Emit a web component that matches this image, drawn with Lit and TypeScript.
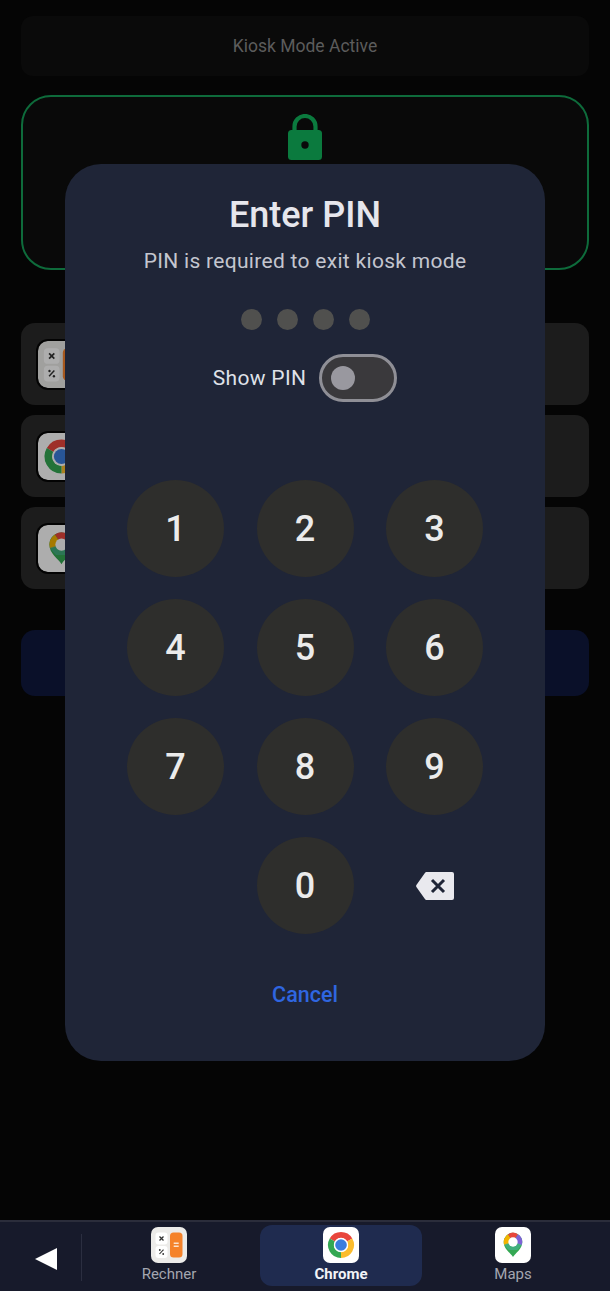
import { LitElement, html, css, svg } from "lit";
import { customElement } from "lit/decorators.js";

const calcIcon = svg`<svg viewBox="0 0 36 36" width="100%" height="100%">
  <rect width="36" height="36" rx="7" fill="#ecebe9"/>
  <rect x="4.500" y="5.500" width="12" height="12" rx="3" fill="#fff"/>
  <rect x="4.500" y="19" width="12" height="12" rx="3" fill="#fff"/>
  <rect x="19" y="5.500" width="12.500" height="25" rx="3.500" fill="#f5822a"/>
  <path d="M8.500 9.500l4 4M12.500 9.500l-4 4" stroke="#333" stroke-width="1.300"/>
  <path d="M8.500 27l4-4.400" stroke="#333" stroke-width="1.100"/>
  <circle cx="8.800" cy="23" r=".9" fill="#333"/><circle cx="12.200" cy="27" r=".9" fill="#333"/>
  <path d="M22.700 16.300h5M22.700 19.300h5" stroke="#fbe3cf" stroke-width="1.500"/>
</svg>`;

const chromeIcon = svg`<svg viewBox="0 0 36 36" width="100%" height="100%">
  <rect width="36" height="36" rx="7" fill="#fff"/>
  <g fill="none" stroke-width="6">
    <path d="M9.340 13A10 10 0 0 1 26.660 13" stroke="#e8453c"/>
    <path d="M26.660 13A10 10 0 0 1 18 28" stroke="#fbbc2d"/>
    <path d="M18 28A10 10 0 0 1 9.340 13" stroke="#34a853"/>
  </g>
  <circle cx="18" cy="18" r="7.200" fill="#fff"/>
  <circle cx="18" cy="18" r="5.800" fill="#3b7ddd"/>
</svg>`;

const mapsIcon = svg`<svg viewBox="0 0 36 36" width="100%" height="100%">
  <rect width="36" height="36" rx="7" fill="#fff"/>
  <path d="M18 30C15.500 26 8.700 22 8.700 15A9.300 9.300 0 0 1 27.300 15C27.300 22 20.500 26 18 30Z" fill="#34a853"/>
  <path d="M9.200 18A9.300 9.300 0 0 1 13 7.200L18 15Z" fill="#f4b400"/>
  <path d="M13 7.200A9.300 9.300 0 0 1 23 7.200L18 15Z" fill="#e8453c"/>
  <path d="M23 7.200A9.300 9.300 0 0 1 27.300 15L26.700 18.300L18 15Z" fill="#7e62d6"/>
  <path d="M9.200 17.300L18 15L26.800 17.300C25.700 19.500 24 21.300 22.200 23L13.800 23C12 21.300 10.300 19.500 9.200 17.300Z" fill="#4db3a0" opacity=".55"/>
  <circle cx="18" cy="15" r="4.700" fill="#fff"/>
</svg>`;

const backspace = svg`<svg viewBox="0 0 38 28" width="38" height="28">
  <path d="M10.500 0H36a2 2 0 0 1 2 2V26a2 2 0 0 1-2 2H10.500a2 2 0 0 1-1.600-.9L0.400 15a2 2 0 0 1 0-2L8.900 .9A2 2 0 0 1 10.500 0Z" fill="#e9e9ee"/>
  <path d="M16 8l12 12M28 8L16 20" stroke="#1f2537" stroke-width="3"/>
</svg>`;

const lock = svg`<svg viewBox="0 0 36 46" width="36" height="46">
  <path d="M7.500 17V12.500a10.500 10.500 0 0 1 21 0V17" fill="none" stroke="#0b7a3e" stroke-width="4.200"/>
  <rect x="1" y="16" width="34" height="30" rx="3.500" fill="#0b7a3e"/>
  <circle cx="18" cy="31" r="3.700" fill="#0a0a0a"/>
</svg>`;

@customElement("app-root")
export class AppRoot extends LitElement {
  static styles = css`
    :host {
      display: flex;
      flex-direction: column;
      position: relative;
      height: 1291px;
      overflow: hidden;
      background: #050505;
      font-family: Roboto, "Noto Sans", sans-serif;
    }
    .page {
      flex: 1;
      padding: 16px 21px 0;
      display: flex;
      flex-direction: column;
    }
    .head {
      height: 60px;
      border-radius: 12px;
      background: #0a0a0a;
      color: #5c5c5c;
      font-size: 17.500px;
      font-weight: 400;
      display: flex;
      align-items: center;
      justify-content: center;
    }
    .status {
      margin-top: 19px;
      height: 175px;
      box-sizing: border-box;
      border: 2.500px solid #0e6b3b;
      border-radius: 30px;
      background: #090909;
      display: flex;
      justify-content: center;
      padding-top: 16.500px;
    }
    .rows {
      margin-top: 53px;
      display: flex;
      flex-direction: column;
      gap: 10px;
    }
    .row {
      height: 82px;
      border-radius: 14px;
      background: #1c1c1c;
      padding: 18px 17px 0;
      box-sizing: border-box;
    }
    .row-icon {
      width: 47px;
      height: 47px;
      border-radius: 10px;
      overflow: hidden;
      box-shadow: 0 0 0 2px #050505;
      filter: brightness(.68);
    }
    .cta {
      margin-top: 41px;
      height: 66px;
      border-radius: 14px;
      background: #0a1029;
    }
    .bar {
      height: 71px;
      box-sizing: border-box;
      border-top: 2px solid #2b2d3b;
      background: #171a2b;
      padding: 3px 16px 5px 0;
      display: flex;
      align-items: stretch;
    }
    .back {
      width: 82px;
      flex: none;
      margin: 9px 0 5px;
      border-right: 1px solid #2b2e40;
      display: flex;
      align-items: center;
      padding-left: 35px;
      box-sizing: border-box;
    }
    .back svg { display: block; margin-top: 2px; }
    .tabs {
      flex: 1;
      margin-left: 6px;
      display: grid;
      grid-template-columns: repeat(3, 1fr);
      gap: 10px;
    }
    .tab {
      border-radius: 12px;
      display: flex;
      flex-direction: column;
      align-items: center;
      padding-top: 2px;
      color: #a4a6b0;
      font-size: 15px;
      line-height: 16px;
    }
    .tab.on {
      background: #1f2b4f;
      color: #f2f3f7;
      font-weight: 700;
    }
    .tab-icon {
      width: 36px;
      height: 36px;
      margin-bottom: 3px;
    }
    .dialog {
      position: absolute;
      left: 65px;
      top: 164px;
      width: 480px;
      height: 897px;
      box-sizing: border-box;
      border-radius: 36px;
      background: #1f2537;
      display: flex;
      flex-direction: column;
      align-items: center;
      padding-top: 30px;
    }
    h1 {
      margin: 0;
      color: #e6e6ec;
      font-size: 36px;
      line-height: 42px;
      font-weight: 500;
    }
    .sub {
      margin-top: 12px;
      color: #c4c6cf;
      font-size: 21px;
      line-height: 26px;
      letter-spacing: .3px;
    }
    .dots {
      margin-top: 35px;
      display: flex;
      gap: 15px;
    }
    .dots i {
      width: 21px;
      height: 21px;
      border-radius: 50%;
      background: #50504e;
    }
    .show {
      margin-top: 24px;
      display: flex;
      align-items: center;
      gap: 13px;
      color: #dfe1e8;
      font-size: 21px;
      letter-spacing: .3px;
    }
    .switch {
      width: 78px;
      height: 48px;
      box-sizing: border-box;
      border: 3px solid #8f8f96;
      border-radius: 24px;
      background: #3a393c;
      display: flex;
      align-items: center;
      padding-left: 9px;
    }
    .switch i {
      width: 24px;
      height: 24px;
      border-radius: 50%;
      background: #99989f;
    }
    .keys {
      margin-top: 78px;
      display: grid;
      grid-template-columns: repeat(3, 97px);
      grid-auto-rows: 97px;
      column-gap: 32.500px;
      row-gap: 22px;
    }
    .key {
      border-radius: 50%;
      background: #2e2e2c;
      color: #ebebeb;
      font-size: 36px;
      font-weight: 500;
      display: flex;
      align-items: center;
      justify-content: center;
    }
    .zero { grid-column: 2; }
    .del {
      display: flex;
      align-items: center;
      justify-content: center;
    }
    .cancel {
      margin-top: 47px;
      color: #2f66e0;
      font-size: 21.500px;
      line-height: 28px;
      font-weight: 500;
    }
  `;

  render() {
    const rows = [calcIcon, chromeIcon, mapsIcon];
    const tabs = [
      { label: "Rechner", icon: calcIcon, on: false },
      { label: "Chrome", icon: chromeIcon, on: true },
      { label: "Maps", icon: mapsIcon, on: false },
    ];
    const keys = ["1", "2", "3", "4", "5", "6", "7", "8", "9"];
    return html`
      <div class="page">
        <div class="head">Kiosk Mode Active</div>
        <div class="status">${lock}</div>
        <div class="rows">
          ${rows.map((i) => html`<div class="row"><div class="row-icon">${i}</div></div>`)}
        </div>
        <div class="cta"></div>
      </div>
      <div class="bar">
        <div class="back">
          <svg width="22" height="22" viewBox="0 0 22 22"><path d="M0 11L22 0V22Z" fill="#fff"/></svg>
        </div>
        <div class="tabs">
          ${tabs.map(
            (t) => html`<div class="tab ${t.on ? "on" : ""}">
              <div class="tab-icon">${t.icon}</div>
              <span>${t.label}</span>
            </div>`
          )}
        </div>
      </div>
      <div class="dialog">
        <h1>Enter PIN</h1>
        <div class="sub">PIN is required to exit kiosk mode</div>
        <div class="dots"><i></i><i></i><i></i><i></i></div>
        <div class="show"><span>Show PIN</span><div class="switch"><i></i></div></div>
        <div class="keys">
          ${keys.map((k) => html`<div class="key">${k}</div>`)}
          <div class="key zero">0</div>
          <div class="del">${backspace}</div>
        </div>
        <div class="cancel">Cancel</div>
      </div>
    `;
  }
}
